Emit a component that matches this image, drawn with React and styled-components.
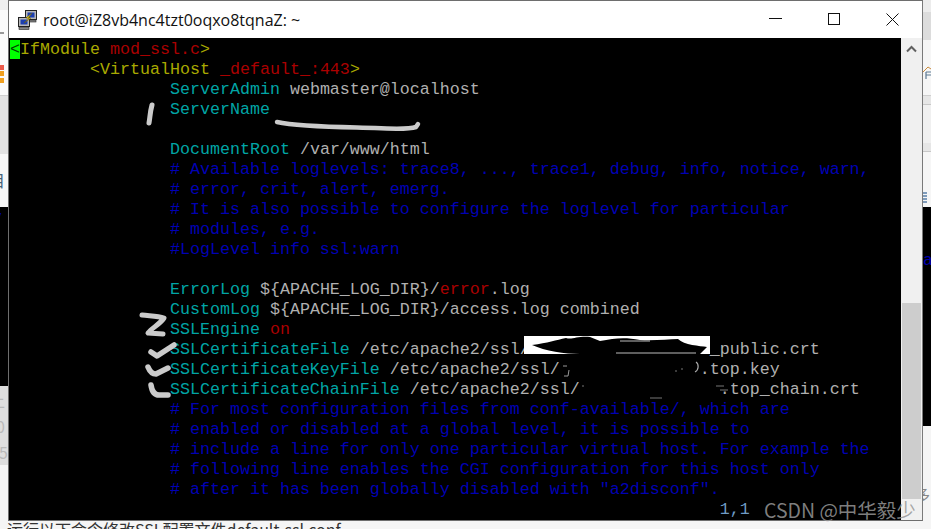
import React from "react";
import styled, { createGlobalStyle } from "styled-components";

const Global = createGlobalStyle`
  html, body { margin: 0; padding: 0; background: #f5f5f5; overflow: hidden; }
  #root { width: 931px; height: 529px; }
`;

const Page = styled.div`
  position: relative;
  width: 931px;
  height: 529px;
  overflow: hidden;
  display: flex;
  flex-direction: column;
  background: #f5f5f5;
`;
const Upper = styled.div`
  display: flex;
  height: 521px;
  flex: none;
`;
const Strip = styled.div`
  width: 8px;
  flex: none;
  display: flex;
  flex-direction: column;
  overflow: hidden;
`;
const Band = styled.div`
  flex: none;
  height: ${(p) => p.$h}px;
  background: ${(p) => p.$bg};
  border-bottom: ${(p) => (p.$rule ? `1px solid ${p.$rule}` : "none")};
  box-sizing: border-box;
  overflow: hidden;
  white-space: nowrap;
  display: flex;
  flex-direction: column;
  align-items: flex-start;
  padding-top: ${(p) => p.$pt || 0}px;
  gap: ${(p) => p.$gap || 0}px;
  font-family: "Noto Sans CJK SC", "Liberation Sans", sans-serif;
  font-size: 16px;
  line-height: 20px;
  color: ${(p) => p.$fg || "#bbb"};
`;
const Clip = styled.span`
  display: block;
  margin-left: ${(p) => p.$ml || 0}px;
`;
const MonoClip = styled(Clip)`
  font-family: "Liberation Mono", monospace;
  font-size: 16.67px;
`;
const StripIcon = styled.svg`
  display: block;
  flex: none;
`;
const Window = styled.div`
  flex: none;
  width: 915px;
  box-sizing: border-box;
  border: 1px solid #6e6e6e;
  border-right-color: #7a7a7a;
  display: flex;
  flex-direction: column;
  background: #fff;
`;
const TitleBar = styled.div`
  height: 37px;
  flex: none;
  display: flex;
  align-items: center;
  padding-left: 9px;
  background: #fff;
`;
const AppIcon = styled.svg`
  flex: none;
  display: block;
`;
const TitleText = styled.div`
  margin-left: 5px;
  font-family: "Open Sans", "Noto Sans", sans-serif;
  font-size: 16px;
  color: #111;
  white-space: pre;
  flex: 1;
`;
const WinButtons = styled.div`
  display: flex;
  width: 153px;
  flex: none;
  justify-content: space-between;
  padding: 0 23px 0 0;
  box-sizing: border-box;
`;
const WinButton = styled.svg`
  display: block;
  width: 13px;
  height: 13px;
`;
const Body = styled.div`
  display: flex;
  flex: 1;
  min-height: 0;
`;
const Terminal = styled.div`
  width: 892px;
  flex: none;
  box-sizing: border-box;
  padding: 2px 0 0 1px;
  background: #000;
  font-family: "Liberation Mono", monospace;
  font-size: 16.67px;
`;
const Line = styled.div`
  height: 20px;
  line-height: 20px;
  white-space: pre;
  color: #b0b0b0;
`;
const tones = {
  yellow: "#a9a900",
  red: "#aa0000",
  cyan: "#00a5a5",
  blue: "#0000b4",
  steel: "#6f9bc4",
};
const Tok = styled.span`
  color: ${(p) => tones[p.$t]};
`;
const Cursor = styled.span`
  background: #00ff00;
  color: #004000;
`;
const Scrollbar = styled.div`
  width: 21px;
  flex: none;
  background: #f0f0f0;
  display: flex;
  flex-direction: column;
  align-items: center;
  box-sizing: border-box;
`;
const Chevron = styled.svg`
  display: block;
  width: 11px;
  height: 8px;
  margin-top: 7px;
  flex: none;
`;
const Thumb = styled.div`
  width: 19px;
  height: 196px;
  margin-top: 250px;
  flex: none;
  background: #cdcdcd;
`;
const Caption = styled.div`
  height: 8px;
  flex: none;
  overflow: hidden;
  padding-left: 7px;
  font-family: "Noto Sans CJK SC", "Liberation Sans", sans-serif;
  font-size: 16px;
  line-height: 16px;
  color: #333;
  white-space: nowrap;
`;
const Overlay = styled.svg`
  position: absolute;
  left: 0;
  top: 0;
  width: 931px;
  height: 529px;
  pointer-events: none;
`;
const Mark = styled.path`
  fill: none;
  stroke: #cbcbcb;
  stroke-width: ${(p) => p.$w || 5}px;
  stroke-linecap: round;
  stroke-linejoin: round;
`;
const Watermark = styled.div`
  position: absolute;
  left: 764px;
  top: 497px;
  font-family: "Noto Sans CJK SC", "Noto Sans", sans-serif;
  font-size: 19.5px;
  line-height: 26px;
  color: rgba(150, 150, 150, 0.85);
  white-space: nowrap;
`;

const L = ({ n, children }) => (
  <Line>
    {" ".repeat(n || 0)}
    {children}
  </Line>
);
const comment = (t) => (
  <L n={16}>
    <Tok $t="blue">{t}</Tok>
  </L>
);
const kv = (k, v) => (
  <L n={16}>
    <Tok $t="cyan">{k}</Tok> {v}
  </L>
);

const PuttyIcon = () => (
  <AppIcon width="20" height="20" viewBox="0 0 20 20">
    <rect x="7.5" y="0.5" width="11" height="9" fill="#b8b8b8" stroke="#222" />
    <rect x="9.5" y="2.5" width="7" height="5" fill="#1c3fb0" />
    <rect x="8" y="10" width="10" height="2" fill="#888" stroke="#222" strokeWidth="0.6" />
    <rect x="0.5" y="7.5" width="11" height="9" fill="#b8b8b8" stroke="#222" />
    <rect x="2.5" y="9.5" width="7" height="5" fill="#1c3fb0" />
    <rect x="1" y="17" width="10" height="2.5" fill="#888" stroke="#222" strokeWidth="0.6" />
    <path d="M14 3 L8 8 L11 8.5 L6 13 L13 8 L10.5 7.5 Z" fill="#f2d21a" stroke="#6d5c00" strokeWidth="0.5" />
  </AppIcon>
);

const MiniIcons = () => (
  <StripIcon width="8" height="85" viewBox="0 0 8 85">
    <path d="M0 23H4" stroke="#777" strokeWidth="1.5" />
    <rect x="0" y="55" width="4" height="5" fill="#ec5a4a" />
    <rect x="0" y="61" width="4" height="5" fill="#f0a020" />
    <rect x="0" y="68" width="4" height="5" fill="#f0a020" />
  </StripIcon>
);

const HouseIcon = () => (
  <StripIcon width="8" height="16" viewBox="0 0 8 16">
    <path d="M0 8L5 3L8 5" fill="none" stroke="#c98a3c" strokeWidth="1" />
    <path d="M3 8H8M3 8V15M3 11H8" fill="none" stroke="#5d7a94" strokeWidth="1.2" />
  </StripIcon>
);

const TagIcon = () => (
  <StripIcon width="8" height="12" viewBox="0 0 8 12">
    <path d="M0 1H4M0 4H4M0 7H4M0 10H4" stroke="#5a7fa8" strokeWidth="1.5" />
  </StripIcon>
);

export default function App() {
  return (
    <Page>
      <Global />
      <Upper>
        <Strip>
          <Band $h={10} $bg="#efefef" />
          <Band $h={86} $bg="#fafafa" $rule="#cfcfcf">
            <MiniIcons />
          </Band>
          <Band $h={58} $bg="#e2e2e2" />
          <Band $h={53} $bg="#f7f7f7" $fg="#46627a" $pt={16}>
            <Clip $ml={-11}>目</Clip>
          </Band>
          <Band $h={179} $bg="#000" $fg="#0000b4" $pt={1}>
            <Clip $ml={-8}>V</Clip>
          </Band>
          <Band $h={79} $bg="#dedede" $fg="#b9b9b9" $pt={4} $gap={6}>
            <Clip $ml={-11}>上</Clip>
            <Clip $ml={-4}>0</Clip>
            <Clip $ml={-1}>50</Clip>
          </Band>
          <Band $h={56} $bg="#f5f5f5" />
        </Strip>
        <Window>
          <TitleBar>
            <PuttyIcon />
            <TitleText>root@iZ8vb4nc4tzt0oqxo8tqnaZ: ~</TitleText>
            <WinButtons>
              <WinButton viewBox="0 0 13 13">
                <path d="M0 5.5H13" stroke="#111" strokeWidth="1" />
              </WinButton>
              <WinButton viewBox="0 0 13 13">
                <rect x="0.5" y="0.5" width="11" height="11" fill="none" stroke="#111" />
              </WinButton>
              <WinButton viewBox="0 0 13 13">
                <path d="M0.5 0.5L12.5 12.5M12.5 0.5L0.5 12.5" stroke="#111" strokeWidth="1" />
              </WinButton>
            </WinButtons>
          </TitleBar>
          <Body>
            <Terminal>
              <Line>
                <Cursor>{"<"}</Cursor>
                <Tok $t="yellow">IfModule</Tok> <Tok $t="red">mod_ssl.c</Tok>
                <Tok $t="yellow">{">"}</Tok>
              </Line>
              <L n={8}>
                <Tok $t="yellow">{"<VirtualHost"}</Tok> <Tok $t="red">_default_:443</Tok>
                <Tok $t="yellow">{">"}</Tok>
              </L>
              {kv("ServerAdmin", "webmaster@localhost")}
              {kv("ServerName", "")}
              <Line />
              {kv("DocumentRoot", "/var/www/html")}
              {comment("# Available loglevels: trace8, ..., trace1, debug, info, notice, warn,")}
              {comment("# error, crit, alert, emerg.")}
              {comment("# It is also possible to configure the loglevel for particular")}
              {comment("# modules, e.g.")}
              {comment("#LogLevel info ssl:warn")}
              <Line />
              <L n={16}>
                <Tok $t="cyan">ErrorLog</Tok> {"${APACHE_LOG_DIR}/"}
                <Tok $t="red">error</Tok>.log
              </L>
              {kv("CustomLog", "${APACHE_LOG_DIR}/access.log combined")}
              <L n={16}>
                <Tok $t="cyan">SSLEngine</Tok> <Tok $t="red">on</Tok>
              </L>
              {kv("SSLCertificateFile", "/etc/apache2/ssl/" + " ".repeat(18) + "_public.crt")}
              {kv("SSLCertificateKeyFile", "/etc/apache2/ssl/" + " ".repeat(14) + ".top.key")}
              {kv("SSLCertificateChainFile", "/etc/apache2/ssl/" + " ".repeat(14) + ".top_chain.crt")}
              {comment("# For most configuration files from conf-available/, which are")}
              {comment("# enabled or disabled at a global level, it is possible to")}
              {comment("# include a line for only one particular virtual host. For example the")}
              {comment("# following line enables the CGI configuration for this host only")}
              {comment('# after it has been globally disabled with "a2disconf".')}
              <Line>
                {" ".repeat(71)}
                <Tok $t="steel">1,1</Tok>
              </Line>
            </Terminal>
            <Scrollbar>
              <Chevron viewBox="0 0 11 8">
                <path d="M1 6.5L5.5 2L10 6.5" fill="none" stroke="#606060" strokeWidth="2" />
              </Chevron>
              <Thumb />
            </Scrollbar>
          </Body>
        </Window>
        <Strip>
          <Band $h={12} $bg="#ececec" />
          <Band $h={28} $bg="#dcdcdc" />
          <Band $h={56} $bg="#f6f6f6" $rule="#cfcfcf" $pt={24}>
            <HouseIcon />
          </Band>
          <Band $h={9} $bg="#e6e6e6" $rule="#c8c8c8" />
          <Band $h={38} $bg="#f0f0f0" />
          <Band $h={9} $bg="#e6e6e6" $rule="#c8c8c8" />
          <Band $h={55} $bg="#f6f6f6" $pt={40}>
            <TagIcon />
          </Band>
          <Band $h={219} $bg="#000" $fg="#0000b4" $pt={44}>
            <MonoClip>ap</MonoClip>
          </Band>
          <Band $h={95} $bg="#f5f5f5" $fg="#888" $pt={58}>
            <Clip $ml={-9}>多</Clip>
          </Band>
        </Strip>
      </Upper>
      <Caption>运行以下命令修改SSL配置文件default-ssl.conf</Caption>
      <Overlay viewBox="0 0 931 529">
        <Mark d="M152 105 C150 112 150 118 149 123" />
        <Mark d="M277 122 C300 127 340 127 375 128 C395 129 410 129 416 127 L418 124" $w={4.5} />
        <Mark d="M142 315 C150 316 158 316 164 318 C160 324 152 328 148 333 L163 334" />
        <Mark d="M151 352 L157 356 L174 345" $w={5.5} />
        <Mark d="M148 367 C150 372 153 374 156 374 L168 368" $w={5.5} />
        <Mark d="M151 385 C152 392 155 395 159 395 L168 395" $w={5.5} />
        <path d="M524 336H710V354H524Z" fill="#fff" />
        <path
          d="M532 345 C548 343 556 340 566 338 C572 340 577 336 590 337 L600 341 C615 338 625 337 640 340 C655 341 668 339 678 339 C684 345 700 346 707 347 L700 354 H580 C565 354 545 351 532 345Z"
          fill="#000"
        />
        <path d="M620 341H650M616 353H696" stroke="#bbb" strokeWidth="1" />
        <path d="M564 376 L568 376 L569 370 M563 366H567" stroke="#999" strokeWidth="1" fill="none" />
        <path d="M696 362 C699 364 699 370 695 372" stroke="#aaa" strokeWidth="1.2" fill="none" />
        <path d="M681 369h2M675 371h2M650 398h12M716 386h8M720 390h8M582 386h2" stroke="#777" strokeWidth="1" />
      </Overlay>
      <Watermark>CSDN @中华毅少</Watermark>
    </Page>
  );
}
